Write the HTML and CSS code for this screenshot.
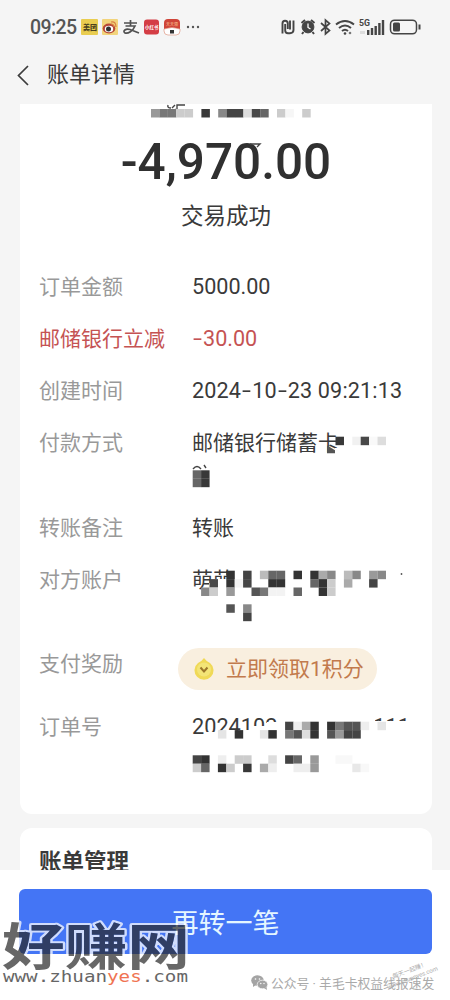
FILE: index.html
```html
<!DOCTYPE html>
<html lang="zh-CN"><head><meta charset="utf-8"><title>账单详情</title><link rel="stylesheet" href="styles.css"></head>
<body><main class="screen">
<header class="status"><span class="clock">09:25</span>
<svg class="apps" width="122" height="20" viewBox="0 0 122 20"><rect x="0" y="2" width="17" height="16" rx="1" fill="#e9cd50"/><text x="2" y="13" font-size="7" font-weight="900" fill="#4b421f">美团</text>
<rect x="21" y="2" width="16" height="16" rx="1" fill="#f2d47c"/><ellipse cx="28" cy="11.5" rx="6.3" ry="5" fill="#b84838"/><ellipse cx="28" cy="12" rx="4.2" ry="3.2" fill="#fff"/><circle cx="27.5" cy="12" r="2.5" fill="#333"/><path d="M30 5q5-1 5 5M30 7q3 0 3 3" fill="none" stroke="#d98043" stroke-width="1.2"/>
<path d="M43 6h13M49.5 3v6M44.5 9H54C52 14 47 17 44 16C41 14 45 11 49 12.500L58 16" fill="none" stroke="#505050" stroke-width="1.7"/>
<rect x="63" y="2.500" width="15" height="15" rx="3" fill="#d43d45"/><text x="64" y="12" font-size="4.500" font-weight="700" fill="#fff">小红书</text>
<rect x="83" y="2" width="16" height="15" rx="4" fill="#cf4438"/><path d="M83 12q8-3 16 0v2q0 4-4 4h-8q-4 0-4-4z" fill="#fff" stroke="#d98a72" stroke-width=".6"/><text x="85" y="9" font-size="4" fill="#ffd29a">天天领</text><rect x="89" y="13" width="4" height="3.500" fill="#333"/>
<g fill="#555"><circle cx="107" cy="10" r="1.200"/><circle cx="112" cy="10" r="1.200"/><circle cx="117" cy="10" r="1.200"/></g></svg>
<svg class="signals" width="142" height="20" viewBox="0 0 142 20" fill="none" stroke="#454545">
<path d="M2.500 16.500V6.500Q2.500 3.800 5 3.800Q7.800 3.800 7.800 6.500V12M5.200 7V13.500Q5.200 16.200 8 16.200H10Q13.500 16.200 13.500 13V3.500M10 3.500V12.500" stroke-width="1.900"/>
<circle cx="28" cy="10" r="5.900" fill="#454545" stroke-width="1"/><path d="M21.500 6l3.500-3M34.500 6L31 3M23.500 15l-1.500 2M32.500 15l1.500 2" stroke-width="2"/><path d="M28 6.500v4l2.500 1.500" stroke="#fff" stroke-width="1.300"/>
<path d="M41 6l8.500 7.500L45.500 17V3l4 3.500L41 14" stroke-width="1.700"/>
<path d="M56 7.500Q65 .5 74 7.500M59 11q6-5 12 0M62 14q3-2.500 6 0" stroke-width="2"/><circle cx="65" cy="16.500" r="1.300" fill="#454545" stroke="none"/><circle cx="70" cy="16" r="1.300" fill="#777" stroke="none"/>
<text x="79" y="9" font-size="9" font-weight="700" fill="#454545" stroke="none" textLength="11" lengthAdjust="spacingAndGlyphs">5G</text>
<path d="M88.200 18v-5M92 18v-7M95.700 18v-9M99.400 18V6M103 18V3" stroke-width="2.400"/><path d="M80 15.500h5" stroke="#ddd" stroke-width="3"/>
<rect x="110.500" y="3.200" width="26" height="13.600" rx="4" stroke-width="1.500"/><rect x="113" y="5.500" width="7" height="9" rx="1.500" fill="#454545" stroke="none"/><path d="M139.500 7.500v5" stroke-width="2"/></svg></header>
<nav class="nav"><svg width="14" height="24" viewBox="0 0 14 24"><path d="M12 3L2.500 12.500L12 22" fill="none" stroke="#3c3c3c" stroke-width="1.700"/></svg><h1>账单详情</h1></nav>
<section class="card bill"><div class="amount">-4,970.00</div><div class="state">交易成功</div>
<dl>
<div class="row"><dt>订单金额</dt><dd>5000.00</dd></div>
<div class="row discount"><dt>邮储银行立减</dt><dd><i>-</i>30.00</dd></div>
<div class="row"><dt>创建时间</dt><dd class="date">2024<i>-</i>10<i>-</i>23 09:21:13</dd></div>
<div class="row tall"><dt>付款方式</dt><dd>邮储银行储蓄卡</dd></div>
<div class="row"><dt>转账备注</dt><dd>转账</dd></div>
<div class="row account"><dt>对方账户</dt><dd>萌萌</dd></div>
<div class="row reward"><dt>支付奖励</dt><dd><span class="pill"><svg width="22" height="24" viewBox="0 0 22 24"><path d="M11 1Q13 4 17 6A9.500 9.500 0 1 1 5 6Q9 4 11 1Z" fill="#f0d957"/><circle cx="11" cy="12.500" r="7" fill="#f3e477"/><path d="M7.500 10.500l3.500 4 3.500-4" fill="none" stroke="#9b762b" stroke-width="2"/></svg>立即领取1积分</span></dd></div>
<div class="row"><dt>订单号</dt><dd class="order"><span>2024102</span><span>111</span></dd></div>
</dl></section>
<section class="card manage"><h2>账单管理</h2></section>
<footer class="footer"><button>再转一笔</button></footer>
<svg class="mosaic" width="450" height="1000" viewBox="0 0 450 1000">
<path fill="#fff" d="M335 448h14v9h-14zM192 469h24v22h-24zM209 585v-2h5v-4h13v-2h8v16h-26zM205 732h34v-2h14v-4h14v-4h14V714h94v7h42v17H205z"/>
<path d="M168 105q-1 3 3 3M172 108l3-3M177 109v-4h8M176 109l-3 3" fill="none" stroke="#444" stroke-width="1.400"/>
<path d="M193 469q4-5 8 0M204 465l2 3M250 144h10l-3 3" fill="none" stroke="#444" stroke-width="1.400"/>
<g transform="translate(151 109) scale(8.400)"><rect fill="#999"/><rect x="1" fill="#777"/><rect x="2" fill="#777"/><rect x="3" fill="#ccc"/><rect x="4" fill="#ccc"/><rect x="6" fill="#383838"/><rect x="8" fill="#888"/><rect x="9" fill="#444"/><rect x="10" fill="#444"/><rect x="11" fill="#ddd"/><rect x="12" fill="#484848"/><rect x="13" fill="#666"/><rect x="15" fill="#ccc"/><rect x="16" fill="#f6f6f6"/><rect x="18" fill="#ccc"/></g>
<g transform="translate(192.700 436.700) scale(8.400)"><rect x="17" fill="#383838"/><rect x="19" fill="#f1f1f1"/><rect x="20" fill="#484848"/><rect x="21" fill="#f9f9f9"/><rect x="22" fill="#ddd"/><rect y="4" fill="#666"/><rect x="1" y="4" fill="#383838"/><rect y="5" fill="#666"/><rect x="1" y="5" fill="#383838"/></g>
<path d="M327 445.200l8 5v3h-8z" fill="#555"/>
<g transform="translate(192.700 570.700) scale(8.400)"><rect x="4" fill="#333"/><rect x="6" fill="#444"/><rect x="8" fill="#bbb"/><rect x="9" fill="#666"/><rect x="10" fill="#666"/><rect x="12" fill="#333"/><rect x="14" fill="#333"/><rect x="15" fill="#aaa"/><rect x="16" fill="#888"/><rect x="18" fill="#bbb"/><rect x="19" fill="#888"/><rect x="21" fill="#999"/><rect x="22" fill="#888"/>
<rect x="2" y="1" fill="#484848"/><rect x="4" y="1" fill="#333"/><rect x="5" y="1" fill="#f3f3f3"/><rect x="6" y="1" fill="#444"/><rect x="9" y="1" fill="#333"/><rect x="10" y="1" fill="#333"/><rect x="14" y="1" fill="#666"/><rect x="15" y="1" fill="#333"/><rect x="16" y="1" fill="#ccc"/><rect x="18" y="1" fill="#aaa"/><rect x="21" y="1" fill="#444"/>
<rect x="1" y="2" fill="#888"/><rect x="2" y="2" fill="#ccc"/><rect x="4" y="2" fill="#999"/><rect x="7" y="2" fill="#555"/><rect x="8" y="2" fill="#777"/><rect x="9" y="2" fill="#f3f3f3"/><rect x="10" y="2" fill="#f3f3f3"/><rect x="12" y="2" fill="#666"/><rect x="15" y="2" fill="#333"/><rect x="16" y="2" fill="#ccc"/><rect x="4" y="4" fill="#555"/><rect x="6" y="4" fill="#888"/><rect x="6" y="5" fill="#444"/></g>
<circle cx="401.500" cy="574" r=".9" fill="#555"/>
<g transform="translate(192.700 721.700) scale(8.400)"><rect x="11" fill="#444"/><rect x="12" fill="#eee"/><rect x="13" fill="#aaa"/><rect x="14" fill="#333"/><rect x="16" fill="#333"/><rect x="17" fill="#777"/><rect x="18" fill="#555"/><rect x="19" fill="#555"/><rect x="20" fill="#eee"/><rect x="22" fill="#e5e5e5"/>
<rect x="3" y="1" fill="#e5e5e5"/><rect x="5" y="1" fill="#333"/><rect x="8" y="1" fill="#e5e5e5"/><rect x="9" y="1" fill="#333"/><rect x="11" y="1" fill="#777"/><rect x="12" y="1" fill="#555"/><rect x="13" y="1" fill="#ddd"/><rect x="14" y="1" fill="#333"/><rect x="16" y="1" fill="#555"/><rect x="17" y="1" fill="#999"/><rect x="18" y="1" fill="#444"/><rect x="19" y="1" fill="#444"/>
<rect y="4" fill="#444"/><rect x="1" y="4" fill="#333"/><rect x="3" y="4" fill="#eee"/><rect x="5" y="4" fill="#ccc"/><rect x="6" y="4" fill="#ccc"/><rect x="9" y="4" fill="#ddd"/><rect x="11" y="4" fill="#444"/><rect x="12" y="4" fill="#666"/><rect x="14" y="4" fill="#999"/><rect x="17" y="4" fill="#f8f8f8"/><rect x="18" y="4" fill="#f8f8f8"/>
<rect y="5" fill="#ccc"/><rect x="1" y="5" fill="#666"/><rect x="3" y="5" fill="#333"/><rect x="4" y="5" fill="#ccc"/><rect x="6" y="5" fill="#383838"/><rect x="8" y="5" fill="#aaa"/><rect x="9" y="5" fill="#eee"/><rect x="12" y="5" fill="#eee"/><rect x="13" y="5" fill="#eee"/><rect x="14" y="5" fill="#999"/><rect x="19" y="5" fill="#e8e8e8"/><rect x="20" y="5" fill="#f8f8f8"/></g></svg>
<svg class="brand" width="200" height="80" viewBox="0 0 200 80"><defs><text id="mark" x="2" y="45" font-size="50" font-weight="700" textLength="188" lengthAdjust="spacingAndGlyphs">好赚网</text><mask id="edge"><use href="#mark" fill="#fff" stroke="#fff" stroke-width="4" stroke-linejoin="round"/><use href="#mark" fill="#000"/></mask></defs><rect width="200" height="60" fill="#fff" opacity=".75" mask="url(#edge)"/><use href="#mark" fill="#282828" opacity=".7"/>
<text class="site" x="3" y="62" font-size="16.500" textLength="185" lengthAdjust="spacingAndGlyphs">www.zhuan<tspan fill="#f07452">yes</tspan>.com</text></svg>
<div class="source"><svg width="17" height="15" viewBox="0 0 17 15"><ellipse cx="6.500" cy="5.500" rx="6.300" ry="5.200" fill="#a4a4a4"/><path d="M2 9l0 3 3-2z" fill="#a4a4a4"/><ellipse cx="11.500" cy="9.500" rx="5.300" ry="4.300" fill="#a4a4a4" stroke="#fff" stroke-width=".7"/><path d="M13 13l3 2-.5-3z" fill="#a4a4a4"/><g fill="#fff"><circle cx="4.500" cy="4" r=".8"/><circle cx="8.500" cy="4" r=".8"/><circle cx="9.800" cy="8.500" r=".7"/><circle cx="13" cy="8.500" r=".7"/></g></svg><span>公众号 · 羊毛卡权益线报速发</span></div>
<div class="stamp">每天一起赚！<br>www.zhuanyes.com</div>
</main></body></html>
```
FILE: styles.css
```css
*{box-sizing:border-box}
body{margin:0;font-family:Roboto,"Noto Sans CJK SC",sans-serif;color:#3a3a3a;background:#f5f5f5}
.screen{position:relative;width:450px;height:1000px;overflow:hidden;display:flex;flex-direction:column;background:#f5f5f5}
.status{height:54px;flex:none;padding:17px 28px 0 30px;display:flex;align-items:flex-start}
.clock{width:50px;font-size:19.5px;line-height:21px;font-weight:500;letter-spacing:-.6px;color:#555}
.apps{margin-left:1px}
.signals{margin-left:auto}
.nav{height:50px;flex:none;display:flex;align-items:center;gap:16px;padding:0 17px 8px}
.nav svg{margin-left:-1px;margin-right:1px}
h1{margin:0;font-size:22px;font-weight:400;line-height:30px}
.card{width:412px;margin-left:20px;background:#fff;flex:none}
.bill{height:710px;border-radius:0 0 12px 12px;padding-top:34px}
.amount{height:48px;line-height:48px;font-size:49.5px;font-weight:500;text-align:center;color:#303030}
.state{font-size:22.5px;line-height:30px;margin-top:15px;text-align:center}
dl{margin:43px 0 0;padding-left:19px}
.row{display:flex;height:52px;font-size:22px;line-height:26px}
dt{width:153px;flex:none;font-size:21px;color:#999}
dd{margin:0;font-size:21.6px}
dd i{display:inline-block;width:11px;text-align:center;font-style:normal;transform:scaleX(1.5)}
.row:nth-child(n+4) dd{font-size:21px}
.discount,.discount dt{color:#c55353}
.row .date{white-space:nowrap;letter-spacing:.15px}
.tall{height:85px}
.account{height:84px}
.reward{height:63px}
.pill{display:flex;align-items:center;gap:11px;width:199px;height:42px;margin:-3px 0 0 -14px;padding-left:15px;border-radius:21px;background:#f9efdf;color:#c27a4d;white-space:nowrap}
.pill svg{flex:none}
.row dd.order{display:flex;font-size:21.7px}
.order span+span{margin-left:96px}
.manage{height:42px;margin-top:14px;border-radius:12px 12px 0 0;overflow:hidden;padding:19px 19px 0}
h2{margin:0;font-size:22.5px;line-height:30px;font-weight:700}
.footer{height:130px;background:#fff;padding:19px 18px 0 19px;flex:none}
button{display:block;width:413px;height:65px;border:0;border-radius:6px;background:#4475f5;color:#e5f6ff;font:400 27px/62px "Noto Sans CJK SC",sans-serif;padding:0}
.mosaic{position:absolute;left:0;top:0}
.mosaic g rect{width:1.01px;height:1.01px}
.brand{position:absolute;left:0;top:920px;font-family:"Noto Sans CJK SC",sans-serif}
.site{font-family:"DejaVu Sans Mono",monospace;fill:#666}
.source{position:absolute;left:251px;top:972px;display:flex;align-items:center;gap:3px;height:20px;font-size:12.8px;color:#aaa;white-space:nowrap}
.stamp{position:absolute;left:380px;top:966px;width:62px;text-align:center;font-size:6px;line-height:8px;color:#aaa;transform:rotate(-21deg);white-space:nowrap}
```
